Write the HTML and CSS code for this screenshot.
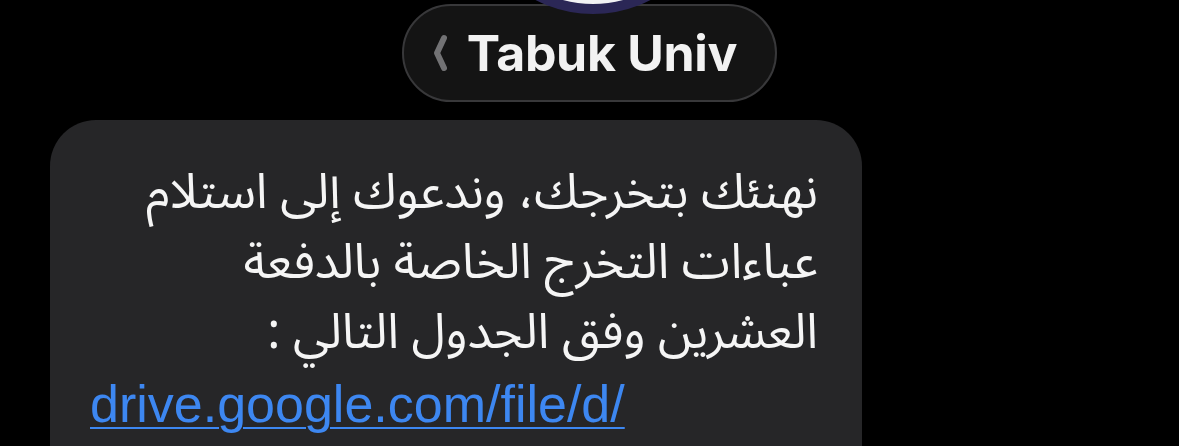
FILE: index.html
```html
<!DOCTYPE html>
<html lang="ar">
<head>
<meta charset="utf-8">
<link rel="stylesheet" href="styles.css">
</head>
<body>
<div class="screen">
  <div class="avatar"></div>
  <header class="head">
    <div class="pill">
      <svg class="chev" width="18" height="40" viewBox="0 0 18 40"><path d="M13 5 L6 20 L13 35" fill="none" stroke="#727274" stroke-width="6" stroke-linecap="round" stroke-linejoin="round"/></svg>
      <span class="name">Tabuk Univ</span>
    </div>
  </header>
  <main class="thread">
    <div class="bubble">
      <p class="msg" dir="rtl">
        <span class="line">نهنئك بتخرجك، وندعوك إلى استلام</span>
        <span class="line">عباءات التخرج الخاصة بالدفعة</span>
        <span class="line">العشرين وفق الجدول التالي :</span>
      </p>
      <a class="link" href="#">drive.google.com/file/d/</a>
    </div>
  </main>
</div>
</body>
</html>
```
FILE: styles.css
```css
html, body {
  margin: 0;
  padding: 0;
  background: #000;
}
.screen {
  position: relative;
  width: 1179px;
  height: 446px;
  overflow: hidden;
  background: #000;
  font-family: "Noto Sans Arabic", "DejaVu Sans", sans-serif;
}
.avatar {
  position: absolute;
  left: 468px;
  top: -236px;
  width: 230px;
  height: 230px;
  border-radius: 50%;
  background: #f2f2f4;
  border: 10px solid #2b2756;
  z-index: 2;
}
.head {
  display: flex;
  justify-content: center;
  padding-top: 4px;
  position: relative;
  z-index: 1;
}
.pill {
  display: flex;
  align-items: center;
  height: 98px;
  box-sizing: border-box;
  padding: 0 38px 0 27px;
  border-radius: 50px;
  background: #141414;
  border: 2px solid #38383a;
  gap: 18px;
}
.chev { display: block; }
.name {
  font-family: Inter, "Liberation Sans", sans-serif;
  font-weight: 700;
  font-size: 50px;
  color: #f2f2f2;
  letter-spacing: -0.3px;
  line-height: 1;
}
.thread {
  padding: 18px 0 0 50px;
}
.bubble {
  width: 812px;
  height: 400px;
  box-sizing: border-box;
  background: #262628;
  border-radius: 46px;
  padding: 38px 44px 0 40px;
}
.msg {
  margin: 0;
  color: #f5f5f5;
  font-size: 49px;
  line-height: 70px;
  text-align: right;
}
.line { display: block; white-space: nowrap; }
.link {
  display: block;
  font-family: "Liberation Sans", Arial, sans-serif;
  font-size: 52px;
  line-height: 72px;
  color: #3d87f1;
  text-decoration: underline;
  text-decoration-thickness: 2px;
  text-underline-offset: 5px;
}
```
